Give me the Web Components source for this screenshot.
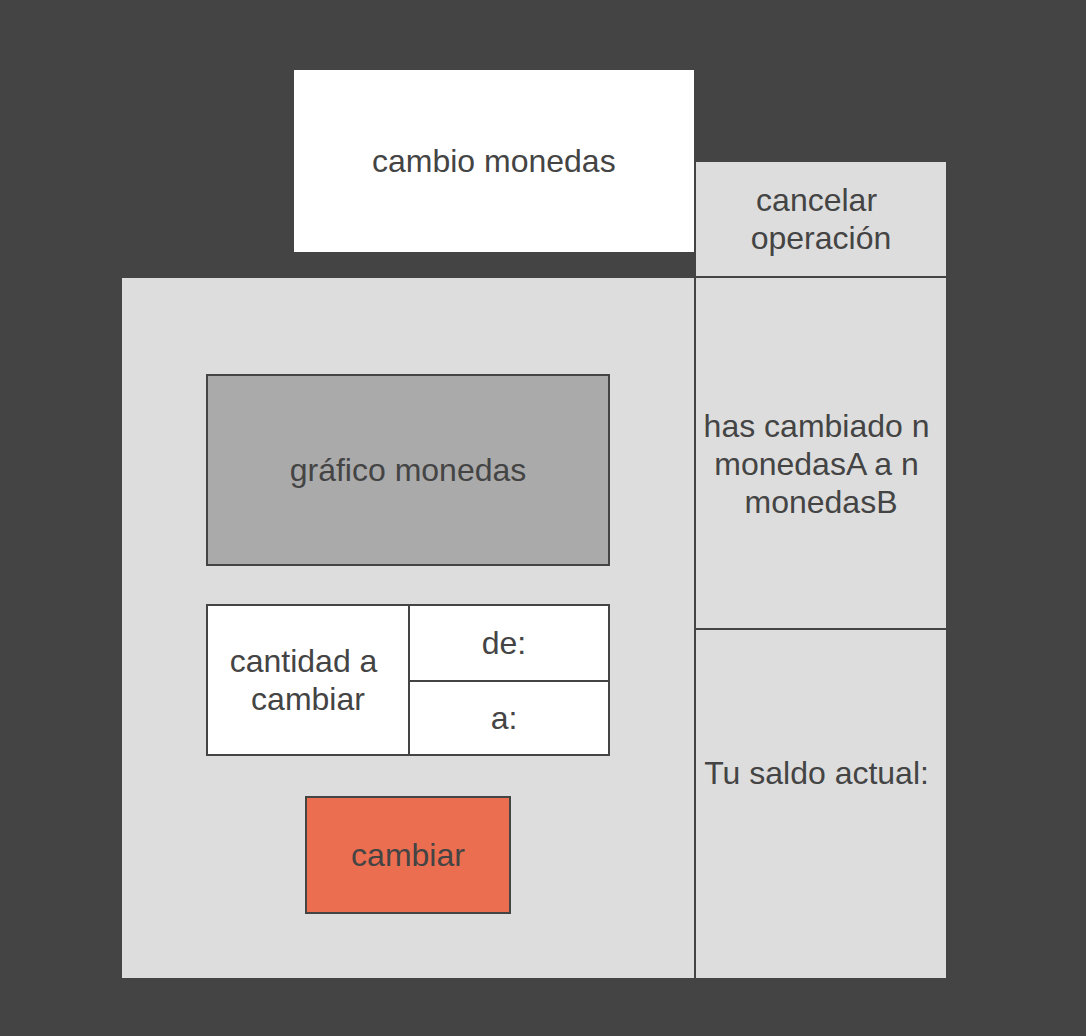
<!DOCTYPE html>
<html lang="es">
<head>
<meta charset="utf-8">
<title>cambio monedas</title>
<style>
  html, body { margin: 0; min-height: 100%; background: #444; }
  body { font: 32px/38px "Liberation Sans", Arial, sans-serif; color: #444; }
</style>
</head>
<body>
<exchange-page></exchange-page>
<script>
function define(name, html) {
  const template = document.createElement('template');
  template.innerHTML = html;
  customElements.define(name, class extends HTMLElement {
    constructor() {
      super();
      this.attachShadow({ mode: 'open' }).append(template.content.cloneNode(true));
    }
  });
}

define('exchange-title', `
  <style>
    :host { display: flex; align-items: center; justify-content: center; background: #fff; }
    h1 { margin: 0; font: inherit; }
  </style>
  <h1><slot></slot></h1>`);

define('side-panel', `
  <style>
    :host { display: flex; flex-direction: column; }
    button, section { box-sizing: border-box; background: #ddd; color: inherit; font: inherit; text-align: center; white-space: pre; }
    button { border: 0; padding: 0; height: 114px; cursor: pointer; }
    section { display: flex; align-items: center; justify-content: center; border-top: 2px solid #444; }
    .status { height: 352px; padding-top: 22px; }
    .balance { flex: 1; padding-bottom: 62px; }
    p { margin: 0; }
  </style>
  <button type="button">cancelar 
operación</button>
  <section class="status"><p>has cambiado n 
monedasA a n 
monedasB</p></section>
  <section class="balance"><p>Tu saldo actual: </p></section>`);

define('coin-chart', `
  <style>
    :host { display: flex; align-items: center; justify-content: center; box-sizing: border-box;
      height: 192px; background: #aaa; border: 2px solid #444; }
  </style>
  <slot></slot>`);

define('amount-field', `
  <style>
    :host { display: flex; align-items: center; justify-content: center; background: #fff; text-align: center; white-space: pre; }
  </style>
  <span><slot></slot></span>`);

define('exchange-form', `
  <style>
    :host { display: block; box-sizing: border-box; background: #ddd; padding: 96px 84px 64px; }
    form { display: flex; flex-direction: column; align-items: center; }
    coin-chart { width: 100%; margin-bottom: 38px; }
    .fields { box-sizing: border-box; width: 100%; height: 152px; display: grid; grid-template-columns: minmax(0, 1fr) 198px;
      grid-template-rows: 74px 1fr; gap: 2px; background: #444; border: 2px solid #444; margin-bottom: 40px; }
    .amount { grid-row: span 2; }
    .from, .to { padding-right: 10px; }
    button { box-sizing: border-box; width: 206px; height: 118px; border: 2px solid #444;
      background: #ec6e50; color: inherit; font: inherit; cursor: pointer; }
  </style>
  <form>
    <coin-chart>gráfico monedas</coin-chart>
    <div class="fields">
      <amount-field class="amount">cantidad a 
cambiar</amount-field>
      <amount-field class="from">de:</amount-field>
      <amount-field class="to">a:</amount-field>
    </div>
    <button type="button">cambiar</button>
  </form>`);

define('exchange-page', `
  <style>
    :host { display: grid; box-sizing: border-box; padding: 70px 140px 58px 122px;
      grid-template-columns: minmax(0, 1fr) 250px; grid-template-rows: 92px 90px 26px auto; column-gap: 2px; }
    exchange-title { grid-area: 1 / 1 / 3 / 2; justify-self: end; width: 70%; }
    side-panel { grid-area: 2 / 2 / 5 / 3; }
    exchange-form { grid-area: 4 / 1 / 5 / 2; }
  </style>
  <exchange-title>cambio monedas</exchange-title>
  <side-panel></side-panel>
  <exchange-form></exchange-form>`);
</script>
</body>
</html>
